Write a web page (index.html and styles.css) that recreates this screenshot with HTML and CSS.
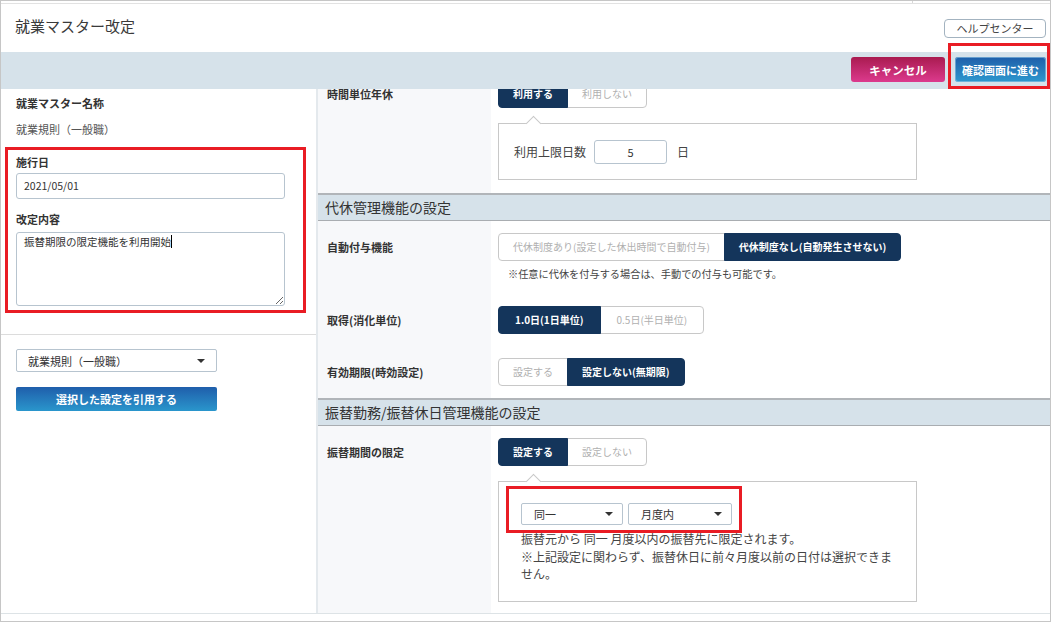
FILE: index.html
```html
<!DOCTYPE html>
<html lang="ja">
<head>
<meta charset="utf-8">
<title>就業マスター改定</title>
<link rel="stylesheet" href="styles.css">
</head>
<body>
<div class="frame">
  <div class="topstrip"><div class="ts-a"></div><div class="ts-b"></div></div>
  <header class="header">
    <h1 class="title">就業マスター改定</h1>
    <button class="help">ヘルプセンター</button>
  </header>
  <div class="toolbar">
    <button class="btn-cancel">キャンセル</button>
    <button class="btn-confirm">確認画面に進む<span class="mark mark-confirm"></span></button>
  </div>
  <div class="main">
    <aside class="left">
      <div class="left-top">
        <div class="lbl">就業マスター名称</div>
        <div class="val">就業規則（一般職）</div>
        <div class="redbox-group">
          <div class="lbl">施行日</div>
          <div class="input date">2021/05/01</div>
          <div class="lbl lbl-gap">改定内容</div>
          <div class="textarea">振替期限の限定機能を利用開始<span class="caret"></span></div>
        </div>
      </div>
      <div class="left-bottom">
        <div class="select wide"><span>就業規則（一般職）</span><i class="arrow"></i></div>
        <button class="btn-quote">選択した設定を引用する</button>
      </div>
    </aside>
    <section class="right">
      <div class="scroller">
        <div class="row">
          <div class="rlabel">時間単位年休</div>
          <div class="rcontent">
            <div class="seg"><span class="on">利用する</span><span>利用しない</span></div>
            <div class="subbox sub1">
              <span class="sub-text">利用上限日数</span>
              <div class="input num">5</div>
              <span class="unit">日</span>
            </div>
          </div>
        </div>
        <div class="sechead">代休管理機能の設定</div>
        <div class="row">
          <div class="rlabel">自動付与機能</div>
          <div class="rcontent">
            <div class="seg"><span>代休制度あり(設定した休出時間で自動付与)</span><span class="on">代休制度なし(自動発生させない)</span></div>
            <p class="note">※任意に代休を付与する場合は、手動での付与も可能です。</p>
          </div>
        </div>
        <div class="row">
          <div class="rlabel">取得(消化単位)</div>
          <div class="rcontent">
            <div class="seg seg-unit"><span class="on">1.0日(1日単位)</span><span>0.5日(半日単位)</span></div>
          </div>
        </div>
        <div class="row">
          <div class="rlabel">有効期限(時効設定)</div>
          <div class="rcontent">
            <div class="seg"><span>設定する</span><span class="on">設定しない(無期限)</span></div>
          </div>
        </div>
        <div class="sechead">振替勤務/振替休日管理機能の設定</div>
        <div class="row">
          <div class="rlabel">振替期間の限定</div>
          <div class="rcontent">
            <div class="seg"><span class="on">設定する</span><span>設定しない</span></div>
            <div class="subbox sub2">
              <div class="selgroup">
                <div class="select s1"><span>同一</span><i class="arrow"></i></div>
                <div class="select s2"><span>月度内</span><i class="arrow"></i></div>
                <span class="mark mark-sel"></span>
              </div>
              <p class="desc">振替元から 同一 月度以内の振替先に限定されます。<br>※上記設定に関わらず、振替休日に前々月度以前の日付は選択できません。</p>
            </div>
          </div>
        </div>
      </div>
    </section>
  </div>
</div>
</body>
</html>
```
FILE: styles.css
```css
* { box-sizing: border-box; margin: 0; padding: 0; }
html, body { width: 1051px; height: 622px; overflow: hidden; background: #fff; }
body { font-family: "Noto Sans CJK JP", "Noto Sans", sans-serif; color: #333; }
button { font-family: "Noto Sans CJK JP", "Noto Sans", sans-serif; cursor: pointer; }

.frame {
  width: 1051px; height: 622px;
  border: 1px solid #c6c6c6;
  display: flex; flex-direction: column;
}
.topstrip { height: 3px; flex: none; display: flex; border-bottom: 1px solid #e2e2e2; }
.ts-a { width: 912px; border-right: 1px solid #d8d8d8; }

.header { height: 48px; flex: none; display: flex; justify-content: space-between; align-items: flex-start; }
.title { font-size: 15px; font-weight: 400; line-height: 20px; margin: 12px 0 0 14px; color: #3a3a3a; }
.help {
  margin: 15px 4px 0 0; height: 19px; width: 102px;
  border: 1px solid #a3b3c0; border-radius: 4px; background: #fff;
  font-size: 11px; line-height: 17px; color: #444;
}

.toolbar {
  height: 37px; flex: none; background: #d6e2ea;
  display: flex; justify-content: flex-end; align-items: flex-start;
  gap: 10px; padding: 5px 4px 0 0;
}
.btn-cancel, .btn-confirm {
  height: 25px; border: none; border-radius: 3px;
  color: #fff; font-weight: 700; font-size: 11.5px;
}
.btn-cancel { width: 94px; background: linear-gradient(#a91b50, #dc3a8d); }
.btn-confirm {
  width: 91px; position: relative;
  background: linear-gradient(#1f5ea9, #2d98cf);
  box-shadow: inset 0 0 0 1px rgba(150, 200, 230, 0.6);
  font-size: 11px;
}
.mark { position: absolute; border: 3px solid #e91c24; pointer-events: none; }
.mark-confirm { left: -7px; top: -14px; right: -4px; bottom: -7px; }

.main { height: 525px; flex: none; display: flex; border-bottom: 1px solid #dde3e6; }

.left { width: 317px; flex: none; border-right: 2px solid #e4e9ed; background: #fff; }
.left-top { padding: 6px 10px 21px 15px; border-bottom: 1px solid #dcdcdc; }
.lbl { font-size: 11px; font-weight: 700; line-height: 16px; color: #333; }
.val { font-size: 11px; line-height: 16px; margin-top: 10px; color: #555; }
.redbox-group {
  margin: 10px 0 0 -11px;
  border: 3px solid #e91c24;
  padding: 4px 18px 4px 8px;
}
.lbl-gap { margin-top: 12px; }
.input {
  border: 1px solid #b7c4cf; border-radius: 3px; background: #fff;
  color: #333;
}
.date { margin-top: 3px; height: 26px; padding-left: 7px; font-size: 10.5px; line-height: 24px; }
.textarea {
  margin-top: 5px; height: 74px; width: 100%;
  border: 1px solid #b7c4cf; border-radius: 3px;
  padding: 1px 7px; font-size: 10.5px; line-height: 16px;
  overflow: auto; resize: both; color: #333;
}
.caret { display: inline-block; width: 1px; height: 13px; background: #000; vertical-align: -2px; }

.left-bottom { padding: 14px 0 0 15px; }
.select {
  display: flex; align-items: center; justify-content: space-between;
  border: 1px solid #b7c4cf; border-radius: 2px; background: #fff;
  font-size: 11px; color: #333;
}
.select.wide { width: 201px; height: 23px; padding: 0 11px 0 11px; }
.arrow {
  width: 0; height: 0;
  border-left: 4px solid transparent; border-right: 4px solid transparent;
  border-top: 4px solid #333;
}
.btn-quote {
  margin-top: 15px; width: 201px; height: 24px;
  border: none; border-radius: 2px;
  background: linear-gradient(#1f5eab, #2a96cc);
  color: #fff; font-weight: 700; font-size: 11px;
}

.right { flex: 1; overflow: hidden; background: #fff; }
.scroller { margin-top: -21px; }
.row { display: flex; }
.rlabel {
  width: 173px; flex: none; background: #f7f8fa;
  padding: 12px 0 0 9px;
  font-size: 11px; font-weight: 700; line-height: 28px; color: #333;
}
.rcontent { flex: 1; padding: 12px 0 12px 7px; }
.row:first-child .rcontent { padding-bottom: 13px; }

.seg { display: flex; width: max-content; }
.seg span {
  height: 28px; line-height: 26px; padding: 0 14px;
  border: 1px solid #c8c8c8; background: #fff;
  font-size: 10px; color: #b0b0b0; white-space: nowrap;
}
.seg span + span { margin-left: -1px; }
.seg span:first-child { border-radius: 4px 0 0 4px; }
.seg span:last-child { border-radius: 0 4px 4px 0; }
.seg span.on {
  background: #14355b; border-color: #14355b; color: #fff; font-weight: 700;
  position: relative; z-index: 1;
}
.seg-unit span { padding: 0 16px; }

.subbox { position: relative; margin-top: 15px; width: 419px; border: 1px solid #c8c8c8; background: #fff; }
.subbox::before {
  content: ""; position: absolute; top: -6px; left: 29px;
  width: 10px; height: 10px; background: #fff;
  border-top: 1px solid #c8c8c8; border-left: 1px solid #c8c8c8;
  transform: rotate(45deg);
}
.sub1 { height: 57px; display: flex; align-items: center; padding: 0 15px; }
.sub-text { font-size: 12px; color: #444; }
.num { width: 73px; height: 24px; margin-left: 8px; text-align: center; font-size: 11px; line-height: 22px; }
.unit { margin-left: 10px; font-size: 12px; color: #444; }

.sechead {
  height: 28px; background: #d6e2ea;
  border-top: 2px solid #b1b5b9; border-bottom: 1px solid #a9adb1;
  padding-left: 7px; font-size: 14px; line-height: 25px; color: #333;
}
.note { margin: 5px 0 0 10px; font-size: 10.2px; line-height: 16px; color: #444; }

.sub2 { height: 121px; padding: 21px 19px 10px 22px; }
.selgroup { position: relative; display: flex; gap: 5px; width: max-content; }
.select.s1 { width: 102px; height: 22px; padding: 0 9px 0 12px; }
.select.s2 { width: 104px; height: 22px; padding: 0 9px 0 12px; }
.mark-sel { left: -15px; top: -17px; right: -10px; bottom: -8px; }
.desc { margin-top: 5px; font-size: 12px; line-height: 17.5px; color: #444; }
```
